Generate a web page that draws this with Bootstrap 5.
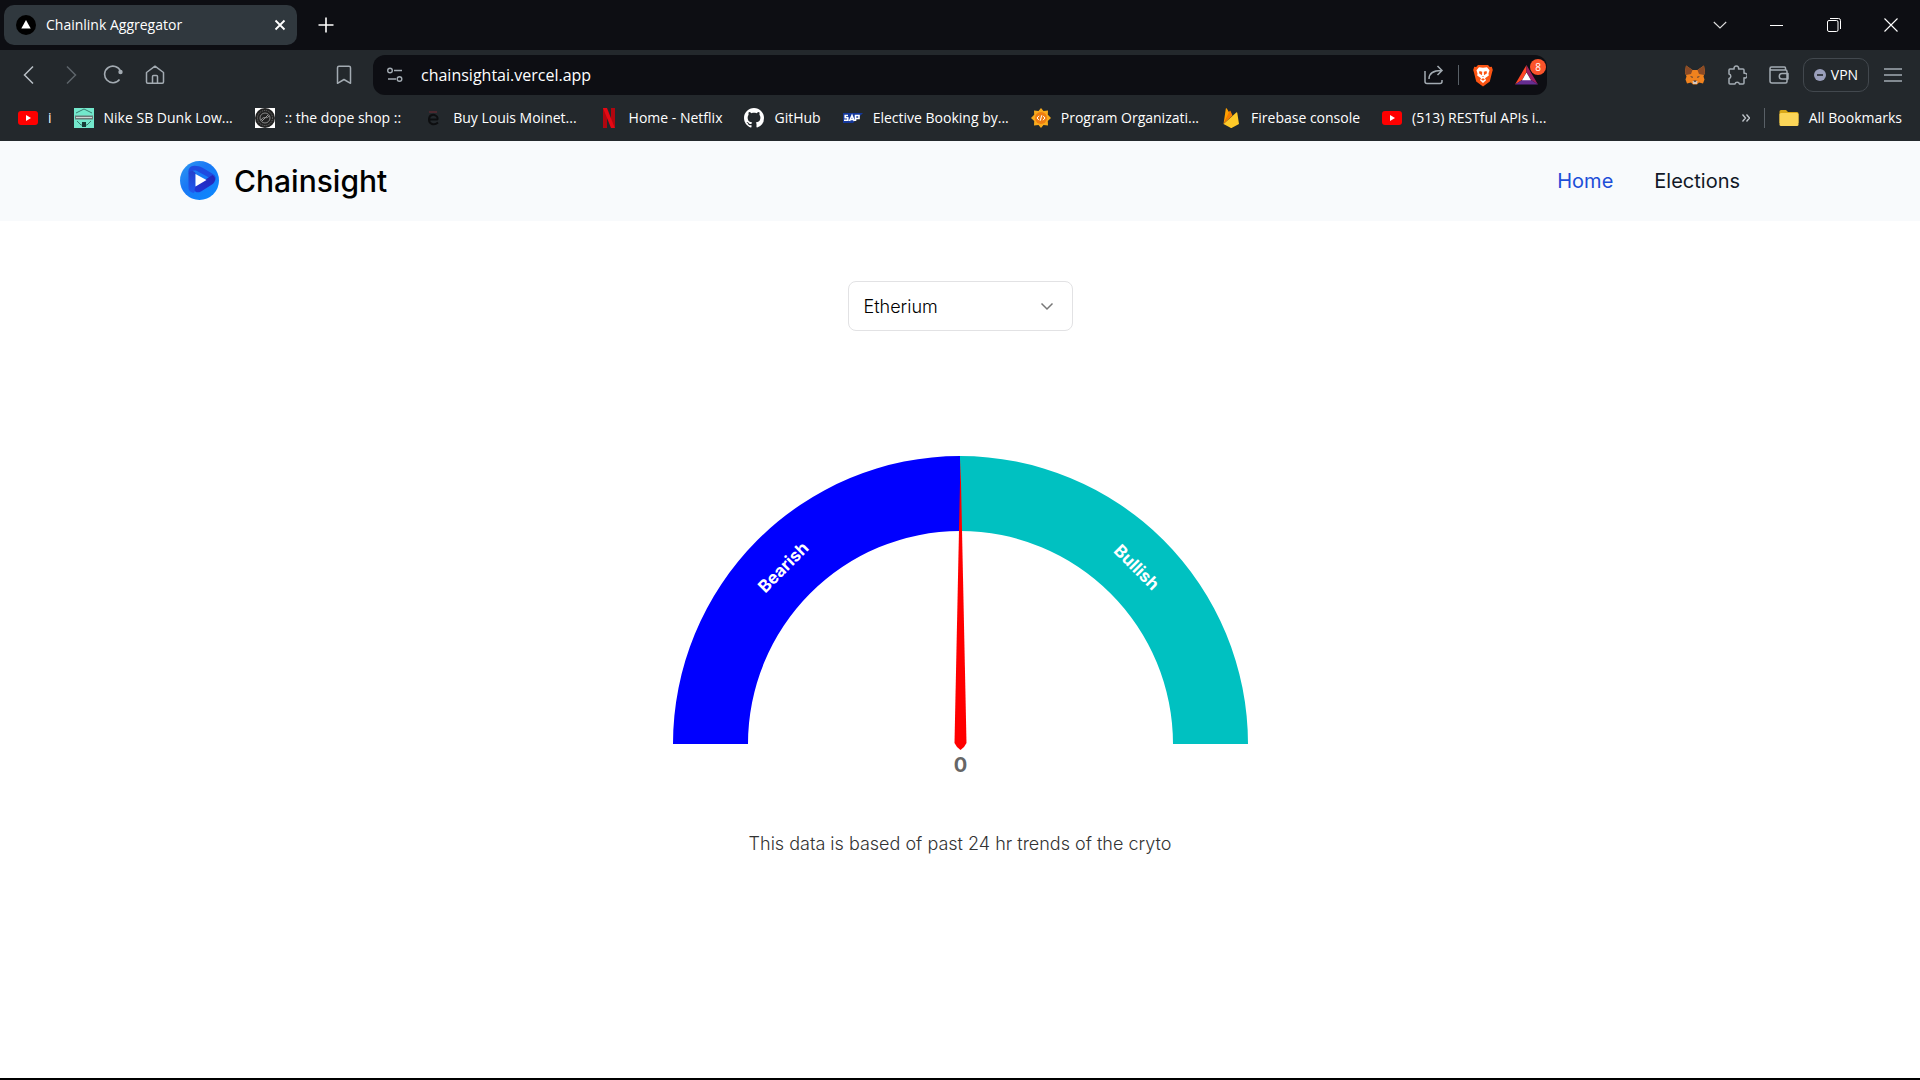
<!DOCTYPE html>
<html lang="en">
<head>
<meta charset="utf-8">
<meta name="viewport" content="width=device-width, initial-scale=1">
<title>Chainlink Aggregator</title>
<link href="https://cdn.jsdelivr.net/npm/bootstrap@5.3.0/dist/css/bootstrap.min.css" rel="stylesheet">
<style>
  body { font-family: Inter, "Liberation Sans", sans-serif; color: #000; }
  svg { display: block; flex: none; }
  .browser { font-family: "Open Sans", "Noto Sans", sans-serif; font-size: 14px; line-height: 20px; color: #fff; background: #23282c; }
  .browser button { background: none; border: 0; padding: 0; color: inherit; display: flex; align-items: center; justify-content: center; flex: none; }
  .tabstrip { height: 50px; background: #0d0e13; padding-left: 4px; padding-right: 1px; }
  .tab-item { width: 293px; height: 40px; border-radius: 10px; background: #30383e; padding: 0 7px 0 12px; }
  .tab-close { width: 20px; height: 20px; }
  .win-btn { width: 57px; height: 50px; }
  .toolbar { height: 50px; color: #a3abb2; }
  .tool-side { width: 373px; }
  .tool-side-end { padding-right: 6px; }
  .tool-btn { width: 42px; height: 40px; }
  .address { height: 40px; border-radius: 12px; background: #0d0e13; padding: 0 9px 0 12px; }
  .address input { background: none; border: 0; outline: 0; color: #fff; font-size: 16px; line-height: 24px; padding: 0; min-width: 0; }
  .address-tools { gap: 14px; }
  .divider { width: 1px; height: 20px; background: #596067; }
  .reward-count { top: -6px; right: -8px; width: 16px; height: 16px; font-size: 10px; line-height: 16px; background: #fb542b; color: #fff; }
  .browser .vpn-btn { width: 66px; height: 34px; margin: 0 3px; border: 1px solid #42484e; border-radius: 10px; color: #fff; gap: 5px; }
  .bookmarks { height: 41px; padding: 0 18px 6px; }
  .bookmarks a { color: #fff; text-decoration: none; white-space: nowrap; }
  .gap-10 { gap: 10px; }
  .gap-22 { gap: 22px; }
  .site-head { background: #f8fafc; height: 80px; }
  .site-wrap { max-width: 1600px; padding: 0 20px; }
  .brand { font-size: 30px; line-height: 36px; font-weight: 500; color: #000; gap: 14px; }
  .site-nav { gap: 41px; font-size: 20px; line-height: 28px; }
  .site-nav a { color: #111827; text-decoration: none; }
  .site-nav a.active { color: #1d4ed8; }
  .stage { padding-top: 60px; }
  .coin-select { width: 225px; height: 50px; border: 1px solid #e2e2e4; border-radius: 8px; font-size: 18px; font-weight: 300; color: #000; padding: 0 44px 0 15px;
    background-image: url("data:image/svg+xml,%3Csvg xmlns='http://www.w3.org/2000/svg' viewBox='0 0 16 16'%3E%3Cpath fill='none' stroke='%23777' stroke-width='1.5' d='M2.5 5.5 8 11l5.500-5.500'/%3E%3C/svg%3E");
    background-position: right 17px center; background-size: 16px 16px; }
  .gauge { width: 576px; margin-top: 125px; }
  .gauge text { font-family: Inter, sans-serif; font-weight: 700; text-anchor: middle; }
  .note { font-size: 18px; line-height: 28px; font-weight: 300; color: #333; margin-top: 54px; }
  .bottom-edge { height: 2px; background: #000; }
</style>
<script src="https://cdn.jsdelivr.net/npm/bootstrap@5.3.0/dist/js/bootstrap.bundle.min.js"></script>
</head>
<body class="d-flex flex-column min-vh-100 bg-white">

<div class="browser">
  <div class="tabstrip d-flex align-items-center">
    <div class="tab-item d-flex align-items-center gap-10">
      <svg width="20" height="20" viewBox="0 0 20 20"><circle cx="10" cy="10" r="10" fill="#000"/><path d="M10 5l4.700 8.500H5.300z" fill="#fff"/></svg>
      <span class="flex-grow-1">Chainlink Aggregator</span>
      <button class="tab-close" aria-label="Close tab"><svg width="12" height="12" viewBox="0 0 12 12" fill="none" stroke="#fff" stroke-width="1.800"><path d="M1.500 1.500l9 9M10.500 1.500l-9 9"/></svg></button>
    </div>
    <button class="win-btn" aria-label="New tab"><svg width="16" height="16" viewBox="0 0 16 16" fill="none" stroke="#fff" stroke-width="1.600"><path d="M8 .5v15M.5 8h15"/></svg></button>
    <div class="d-flex ms-auto">
      <button class="win-btn" aria-label="Search tabs"><svg width="14" height="14" viewBox="0 0 14 14" fill="none" stroke="#ddd" stroke-width="1.100"><path d="M.8 4L7 10l6.200-6"/></svg></button>
      <button class="win-btn" aria-label="Minimize"><svg width="13" height="13" viewBox="0 0 13 13"><path d="M0 6h13v1H0z" fill="#fff"/></svg></button>
      <button class="win-btn" aria-label="Restore"><svg width="14" height="14" viewBox="0 0 14 14" fill="none" stroke="#fff"><rect x=".5" y="2.500" width="10.500" height="11" rx="1.500"/><path d="M3 .5h8.500a2 2 0 0 1 2 2V11"/></svg></button>
      <button class="win-btn" aria-label="Close"><svg width="14" height="14" viewBox="0 0 14 14" fill="none" stroke="#fff" stroke-width="1.100"><path d="M.5.5l13 13M13.500.5l-13 13"/></svg></button>
    </div>
  </div>

  <div class="toolbar d-flex align-items-center">
    <div class="tool-side d-flex flex-shrink-0 px-2">
      <button class="tool-btn" aria-label="Back"><svg width="20" height="20" viewBox="0 0 20 20" fill="none" stroke="#b9c0c6" stroke-width="1.500"><path d="M14 1.500L5.500 10l8.500 8.500"/></svg></button>
      <button class="tool-btn" aria-label="Forward"><svg width="20" height="20" viewBox="0 0 20 20" fill="none" stroke="#5d646a" stroke-width="1.500"><path d="M6 1.500l8.500 8.500L6 18.500"/></svg></button>
      <button class="tool-btn" aria-label="Reload"><svg width="20" height="20" viewBox="0 0 20 20" fill="none" stroke="#a3abb2" stroke-width="1.600"><path d="M16.500 14.500A8.300 8.300 0 1 1 17.500 6"/><circle cx="17.500" cy="7" r="2.200" fill="#a3abb2" stroke="none"/></svg></button>
      <button class="tool-btn" aria-label="Home"><svg width="20" height="20" viewBox="0 0 20 20" fill="none" stroke="#a3abb2" stroke-width="1.500" stroke-linejoin="round"><path d="M1.500 7.500L10 1.200l8.500 6.300v9.500a1.200 1.200 0 0 1-1.200 1.200H2.700A1.200 1.200 0 0 1 1.500 17zM7.500 18v-6.500a1 1 0 0 1 1-1h3a1 1 0 0 1 1 1V18"/></svg></button>
      <button class="tool-btn ms-auto" aria-label="Bookmark this page"><svg width="20" height="20" viewBox="0 0 20 20" fill="none" stroke="#a3abb2" stroke-width="1.500" stroke-linejoin="round"><path d="M3.500 2.800a1.500 1.500 0 0 1 1.500-1.500h10a1.500 1.500 0 0 1 1.500 1.500v15.500L10 14.500l-6.500 3.800z"/></svg></button>
    </div>
    <div class="address d-flex align-items-center flex-grow-1">
      <button aria-label="Site settings"><svg width="20" height="20" viewBox="0 0 20 20" fill="none" stroke="#a3abb2" stroke-width="1.400"><circle cx="5" cy="5.500" r="2.300"/><path d="M9 5.500h8M3 14h8"/><circle cx="14.500" cy="14" r="2.300"/></svg></button>
      <input class="flex-grow-1 ms-3" type="text" value="chainsightai.vercel.app" aria-label="Address">
      <div class="address-tools d-flex align-items-center">
        <button aria-label="Share"><svg width="20" height="20" viewBox="0 0 20 20" fill="none" stroke="#a3abb2" stroke-width="1.500"><path d="M1 6v10.500A2 2 0 0 0 3 18.500h13a2 2 0 0 0 2-2V15M5 14c0-6 4-8.500 12.500-8.500M13.500 1l4.500 4.500-4.500 4.500"/></svg></button>
        <span class="divider"></span>
        <button class="me-2" aria-label="Brave Shields"><svg width="20" height="23" viewBox="0 0 20 23"><path d="M5 1h10l1.800 2 2-.2 1 3.200-.7 2.200-2.300 9.300L10 22.500 3.200 17.500.9 8.200.2 6l1-3.200 2 .2z" fill="#fb5413"/><path d="M10 3.800l4-.6 2.500 3-1 3.300.3 2-3.800 2.700 1 2L10 19l-3-2.800 1-2-3.800-2.700.3-2-1-3.300 2.500-3z" fill="#fff"/><path d="M6.500 7l2.700.8-.2 3.500-3-2M13.500 7l-2.700.8.2 3.500 3-2M8 15.200l2-1 2 1-2 1.500zM9 12h2l-1 1z" fill="#fb5413"/></svg></button>
        <button class="position-relative" aria-label="Brave Rewards"><svg width="23" height="20" viewBox="0 0 23 20"><path d="M11.500 0v7L7 15 0 19.500z" fill="#ff4724"/><path d="M11.500 0L23 19.500 16 15l-4.500-8z" fill="#9e1f63"/><path d="M0 19.500L7 15h9l7 4.500z" fill="#662d91"/><path d="M11.500 7.500l4.500 7.700H7z" fill="#fff"/></svg><span class="reward-count position-absolute rounded-circle text-center">8</span></button>
      </div>
    </div>
    <div class="tool-side tool-side-end d-flex align-items-center justify-content-end flex-shrink-0">
      <button class="tool-btn" aria-label="MetaMask"><svg width="20" height="20" viewBox="0 0 20 20"><path d="M1 .5l6.500 4.500h5L19 .5l1 7-1.500 4 1 3-1.500 4-4-1-2 2H8l-2-2-4 1-1.500-4 1-3L0 7.500z" fill="#f0821e"/><path d="M1 .5l6.500 4.500L6 9 1 10 0 7.500zM19 .5l-6.500 4.500L14 9l5 1 1-2.500z" fill="#8a4a26"/><path d="M7.500 16h5l-.5 3H8z" fill="#d8c8bd"/><path d="M5 11.500l2.500 0 .2 1.500zM15 11.500l-2.500 0-.2 1.500zM8.500 15.500h3l-.5 1.300H9z" fill="#2a2f40"/></svg></button>
      <button class="tool-btn" aria-label="Extensions"><svg width="20" height="20" viewBox="0 0 20 20" fill="none" stroke="#a3abb2" stroke-width="1.500" stroke-linejoin="round"><path d="M3 4h4.200a2.300 2.300 0 1 1 4.300 0H16a1 1 0 0 1 1 1v3.300a2.400 2.400 0 1 1 0 4.500V18a1 1 0 0 1-1 1h-3.500a2.400 2.400 0 0 0-4.600 0H3a1 1 0 0 1-1-1v-4.500a2.300 2.300 0 0 0 0-4.500V5a1 1 0 0 1 1-1z"/></svg></button>
      <button class="tool-btn" aria-label="Wallet"><svg width="20" height="20" viewBox="0 0 20 20" fill="none" stroke="#a3abb2" stroke-width="1.500" stroke-linejoin="round"><path d="M16.500 5V3a1 1 0 0 0-1-1h-13A1.500 1.500 0 0 0 1 3.500V16a2 2 0 0 0 2 2h13.500a1.500 1.500 0 0 0 1.500-1.500v-10A1.500 1.500 0 0 0 16.500 5H2.500A1.500 1.500 0 0 1 1 3.500M19 8.500h-6a2.300 2.300 0 0 0 0 5.500h6z"/></svg></button>
      <button class="vpn-btn"><svg width="12" height="12" viewBox="0 0 12 12"><circle cx="6" cy="6" r="6" fill="#9a9fbb"/><path d="M3 5.200h6v1.600H3z" fill="#23282c"/></svg>VPN</button>
      <button class="tool-btn" aria-label="Menu"><svg width="18" height="16" viewBox="0 0 18 16" fill="none" stroke="#a3abb2" stroke-width="1.500"><path d="M0 2h18M0 8h18M0 14h18"/></svg></button>
    </div>
  </div>

  <nav class="bookmarks d-flex align-items-center gap-22" aria-label="Bookmarks">
    <a href="#" class="d-flex align-items-center gap-10"><svg width="20" height="20" viewBox="0 0 20 20"><rect y="3" width="20" height="14" rx="3" fill="#f00"/><path d="M8 7l5 3-5 3z" fill="#fff"/></svg>i</a>
    <a href="#" class="d-flex align-items-center gap-10"><svg width="20" height="20" viewBox="0 0 20 20"><path d="M0 0h20v20H0z" fill="#73e8cc"/><path d="M2 5l8-4 8 4M3 13l4 4h6l4-4" fill="none" stroke="#397d70"/><path d="M1 7.500h18v4H1z" fill="#6b7a78"/><path d="M2 9h16v1H2z" fill="#ced6d5"/><path d="M8 14h4v5H8z" fill="#173d38"/></svg>Nike SB Dunk Low...</a>
    <a href="#" class="d-flex align-items-center gap-10"><svg width="20" height="20" viewBox="0 0 20 20"><path d="M0 0h20v20H0z" fill="#fff"/><circle cx="10" cy="10" r="10" fill="#222"/><circle cx="10" cy="10" r="7.500" fill="none" stroke="#777" stroke-dasharray="1 1"/><circle cx="10" cy="10" r="5" fill="none" stroke="#888"/><path d="M6 12c3-5 6 0 8-4M7 13l6-6" stroke="#999" fill="none"/></svg>:: the dope shop ::</a>
    <a href="#" class="d-flex align-items-center gap-10"><svg width="20" height="20" viewBox="0 0 20 20"><path d="M6 4h8" stroke="#5a2931" stroke-width="1.500"/><path d="M15 14.500c-4 3.500-9 1.500-9-3s4-5.500 6.500-4S15 11 14 11.500H6" fill="none" stroke="#0d0e10" stroke-width="2"/></svg>Buy Louis Moinet...</a>
    <a href="#" class="d-flex align-items-center gap-10"><svg width="20" height="20" viewBox="0 0 20 20"><path d="M4 0h4v20l-4 .5zM12 0h4v20.500L12 20z" fill="#b1060f"/><path d="M4 0h4l8 20.500-4-.5z" fill="#e50914"/></svg>Home - Netflix</a>
    <a href="#" class="d-flex align-items-center gap-10"><svg width="20" height="20" viewBox="0 0 16 16" fill="#fff"><path d="M8 0C3.580 0 0 3.580 0 8c0 3.540 2.290 6.530 5.470 7.590.4.070.55-.17.55-.38 0-.19-.01-.82-.01-1.490-2.010.37-2.530-.49-2.690-.94-.09-.23-.48-.94-.82-1.130-.28-.15-.68-.52-.01-.53.630-.01 1.080.58 1.230.82.720 1.210 1.870.87 2.330.66.070-.52.280-.87.510-1.070-1.780-.2-3.640-.89-3.640-3.950 0-.87.310-1.590.82-2.150-.08-.2-.36-1.020.08-2.120 0 0 .67-.21 2.200.82.640-.18 1.320-.27 2-.27s1.360.09 2 .27c1.530-1.040 2.200-.82 2.200-.82.440 1.100.160 1.920.080 2.120.51.560.82 1.270.82 2.150 0 3.070-1.870 3.750-3.650 3.950.290.250.54.730.54 1.480 0 1.070-.01 1.930-.01 2.200 0 .21.150.46.550.38A8.010 8.010 0 0 0 16 8c0-4.420-3.580-8-8-8"/></svg>GitHub</a>
    <a href="#" class="d-flex align-items-center gap-10"><svg width="20" height="20" viewBox="0 0 20 20"><path d="M0 5h20L10 15H0z" fill="#14389c"/><g fill="none" stroke="#fff" stroke-width="1.600"><path d="M5 7.500H2.200v2.200h2.600v2.600H1M6.500 13L9 7.500l2.200 5.500M7.500 11.500h3M12.500 13V7.500h3.500v3h-3"/></g></svg>Elective Booking by...</a>
    <a href="#" class="d-flex align-items-center gap-10"><svg width="20" height="20" viewBox="0 0 20 20"><path d="M10 0l2.500 3 4.500-.5-.2 4.300L20 10l-3.200 3 .2 4.500-4.500-.5L10 20l-2.500-3-4.500.5.200-4.500L0 10l3.200-3.200L3 2.500l4.500.5z" fill="#f9ab1d"/><circle cx="10" cy="10" r="6" fill="#ef7d11"/><path d="M8 7.800L6 10l2 2.200M12 7.800l2 2.200-2 2.200M10.700 7.300l-1.400 5.400" fill="none" stroke="#fff"/></svg>Program Organizati...</a>
    <a href="#" class="d-flex align-items-center gap-10"><svg width="20" height="20" viewBox="0 0 20 20"><path d="M2.500 16L4.800.8c.1-.6.8-.6 1-.2L8.500 5 2.500 16z" fill="#ffa000"/><path d="M2.500 16l9-8.500L9.500 3c-.2-.5-.8-.5-1 0z" fill="#f57c00"/><path d="M2.500 16L15.300 4.500c.4-.4.900-.2 1 .4L18 16l-7 3.800c-.5.3-1 .3-1.500 0z" fill="#ffca28"/></svg>Firebase console</a>
    <a href="#" class="d-flex align-items-center gap-10"><svg width="20" height="20" viewBox="0 0 20 20"><rect y="3" width="20" height="14" rx="3" fill="#f00"/><path d="M8 7l5 3-5 3z" fill="#fff"/></svg>(513) RESTful APIs i...</a>
    <div class="d-flex align-items-center ms-auto gap-10">
      <button class="me-1" aria-label="More bookmarks"><svg width="8" height="8" viewBox="0 0 8 8" fill="none" stroke="#c0c6cb" stroke-width="1.300"><path d="M.5.5L3.500 4l-3 3.500M4.500.5L7.500 4l-3 3.500"/></svg></button>
      <span class="divider"></span>
      <a href="#" class="d-flex align-items-center gap-10 ms-1"><svg width="20" height="20" viewBox="0 0 20 20"><path d="M.5 3.500A1.500 1.500 0 0 1 2 2h5l2 2h9a1.500 1.500 0 0 1 1.500 1.500V15H.5z" fill="#d9a818"/><rect x=".5" y="5" width="19" height="13" rx="1.500" fill="#fbd558"/></svg>All Bookmarks</a>
    </div>
  </nav>
</div>

<header class="site-head d-flex align-items-center">
  <div class="site-wrap w-100 mx-auto d-flex align-items-center justify-content-between">
    <a href="#" class="brand d-flex align-items-center text-decoration-none">
      <svg width="40" height="40" viewBox="0 0 40 40">
        <defs>
          <linearGradient id="disc" x1="0" y1="0" x2="1" y2="1"><stop offset="0" stop-color="#2f9df2"/><stop offset=".4" stop-color="#1a78f5"/><stop offset="1" stop-color="#0a8aff"/></linearGradient>
          <linearGradient id="bar" x1="0" y1="1" x2="0" y2="0"><stop offset="0" stop-color="#1f5cf0"/><stop offset="1" stop-color="#2340cc"/></linearGradient>
          <linearGradient id="fold" x1="0" y1="1" x2="1" y2="0"><stop offset="0" stop-color="#2038d8"/><stop offset="1" stop-color="#2424b4"/></linearGradient>
        </defs>
        <circle cx="19.500" cy="19.500" r="19.500" fill="url(#disc)"/>
        <path d="M11 5.500c3-1.500 8-.5 11 1l11 6.500c3 2 3.500 4.500 2 7L27 15.500 17 10c-3-1-6 0-7 2L8.500 13c-.5-4 .5-6 2.500-7.500z" fill="#1f4be0"/>
        <path d="M8.500 13c1-3.500 4.500-4 7-1v16c0 2-1 3.500-2 4-3-.5-5-2.500-5-5z" fill="url(#bar)"/>
        <path d="M25.500 18.500l7-4.500c3.500 2 3.500 7-.5 9.500l-11 7c-3 1.500-6 1-6.500-1.500l1-4z" fill="url(#fold)"/>
        <path d="M15.500 13v12.500l11-6.500z" fill="#fff"/>
      </svg>
      <span>Chainsight</span>
    </a>
    <nav class="site-nav d-flex" aria-label="Main">
      <a href="#" class="active">Home</a>
      <a href="#">Elections</a>
    </nav>
  </div>
</header>

<main class="stage flex-grow-1 d-flex flex-column align-items-center">
  <select class="form-select coin-select" aria-label="Cryptocurrency"><option selected>Etherium</option></select>
  <svg class="gauge" viewBox="0 0 576 320" role="img" aria-label="Market sentiment gauge">
    <path d="M1 288A287.500 288 0 0 1 288 0V75A212.500 213 0 0 0 76 288z" fill="#00f"/>
    <path d="M288 0A288 288 0 0 1 576 288H501A213 213 0 0 0 288 75z" fill="#00c1c1"/>
    <path d="M288.500 3L294.500 287 292 291 288.500 294 285 291 282.500 287z" fill="#f00"/>
    <text transform="translate(288 288) rotate(-45) translate(0 -244)" font-size="17" fill="#fff">Bearish</text>
    <text transform="translate(288 288) rotate(45) translate(0 -244)" font-size="17" fill="#fff">Bullish</text>
    <text x="288.500" y="316" font-size="20" fill="#666">0</text>
  </svg>
  <p class="note mb-0">This data is based of past 24 hr trends of the cryto</p>
</main>
<div class="bottom-edge"></div>

</body>
</html>
